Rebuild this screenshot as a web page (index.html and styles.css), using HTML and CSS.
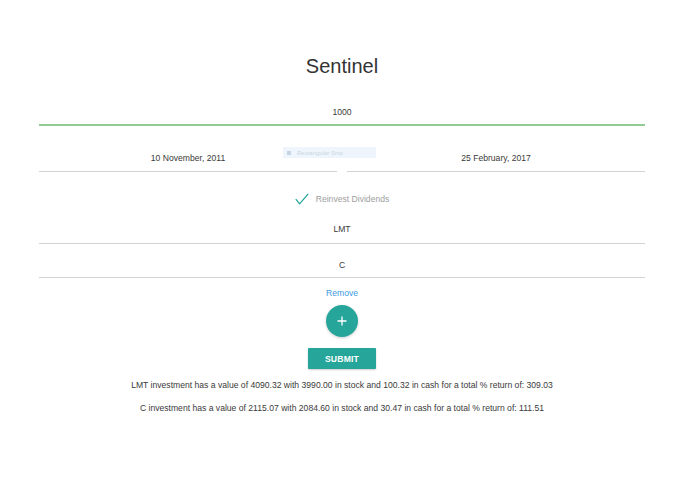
FILE: index.html
```html
<!DOCTYPE html>
<html>
<head>
<meta charset="utf-8">
<link rel="stylesheet" href="styles.css">
</head>
<body>
<div class="page">
  <h1 class="title">Sentinel</h1>
  <div class="field field-amount">1000</div>
  <div class="dates">
    <div class="field field-date">10 November, 2011</div>
    <div class="field field-date">25 February, 2017</div>
  </div>
  <div class="check-row">
    <svg class="check" width="14" height="12" viewBox="0 0 14 12"><polyline points="0.8,6.2 4.6,10.8 13.2,0.8" fill="none" stroke="#26a69a" stroke-width="1.3"/></svg>
    <span class="check-label">Reinvest Dividends</span>
  </div>
  <div class="field field-lmt">LMT</div>
  <div class="field field-c">C</div>
  <a class="remove">Remove</a>
  <div class="fab"><svg width="12" height="12" viewBox="0 0 12 12"><path d="M6 1.5v9M1.5 6h9" stroke="#fff" stroke-width="1.3"/></svg></div>
  <div class="submit">SUBMIT</div>
  <p class="result result-1">LMT investment has a value of 4090.32 with 3990.00 in stock and 100.32 in cash for a total % return of: 309.03</p>
  <p class="result result-2">C investment has a value of 2115.07 with 2084.60 in stock and 30.47 in cash for a total % return of: 111.51</p>
</div>
<div class="snip"><span class="snip-icon"></span><span class="snip-text">Rectangular Snip</span></div>
</body>
</html>
```
FILE: styles.css
```css
html, body {
  margin: 0;
  padding: 0;
  background: #fff;
}
body {
  font-family: "Liberation Sans", Arial, sans-serif;
  color: #3a3a3a;
  position: relative;
  height: 494px;
  overflow: hidden;
}
.page {
  margin-left: 39px;
  width: 606px;
  display: flex;
  flex-direction: column;
  align-items: center;
}
.title {
  margin: 54px 0 0;
  font-size: 20px;
  line-height: 24px;
  font-weight: normal;
  color: #333;
}
.field {
  align-self: stretch;
  text-align: center;
  font-size: 8.6px;
  line-height: 14px;
  color: #3a3a3a;
  border-bottom: 1px solid #d2d2d2;
}
.field-amount {
  padding: 27px 0 5px;
  border-bottom: 2px solid #93cc93;
}
.dates {
  align-self: stretch;
  display: flex;
  gap: 10px;
  margin-top: 25px;
}
.field-date {
  flex: 1;
  padding-bottom: 6px;
}
.check-row {
  margin-top: 20px;
  height: 14px;
  display: flex;
  align-items: center;
  gap: 7px;
}
.check {
  display: block;
  margin-top: -1px;
}
.check-label {
  font-size: 8.6px;
  color: #9e9e9e;
  line-height: 14px;
}
.field-lmt {
  margin-top: 16px;
  padding-bottom: 7px;
}
.field-c {
  margin-top: 14px;
  padding-bottom: 5px;
}
.remove {
  margin-top: 8px;
  font-size: 8.6px;
  line-height: 14px;
  color: #3c9be0;
}
.fab {
  margin-top: 5px;
  width: 32px;
  height: 32px;
  border-radius: 50%;
  background: #26a69a;
  display: flex;
  align-items: center;
  justify-content: center;
  box-shadow: 0 1px 3px rgba(0,0,0,0.2);
}
.fab svg { display: block; }
.submit {
  margin-top: 11px;
  width: 68px;
  height: 21px;
  background: #26a69a;
  color: #fff;
  font-size: 8.6px;
  font-weight: bold;
  display: flex;
  align-items: center;
  justify-content: center;
  border-radius: 1px;
  box-shadow: 0 1px 2px rgba(0,0,0,0.2);
  letter-spacing: 0.2px;
}
.result {
  margin: 9px 0 0;
  font-size: 8.6px;
  line-height: 14px;
  color: #3a3a3a;
  white-space: nowrap;
}
.snip {
  position: absolute;
  left: 283px;
  top: 147px;
  width: 93px;
  height: 11px;
  background: #eef5fc;
  display: flex;
  align-items: center;
  gap: 6px;
  padding-left: 4px;
  box-sizing: border-box;
}
.snip-icon {
  width: 4px;
  height: 4px;
  background: #c5d3e2;
}
.snip-text {
  font-size: 6px;
  color: #cad6e3;
}
```
